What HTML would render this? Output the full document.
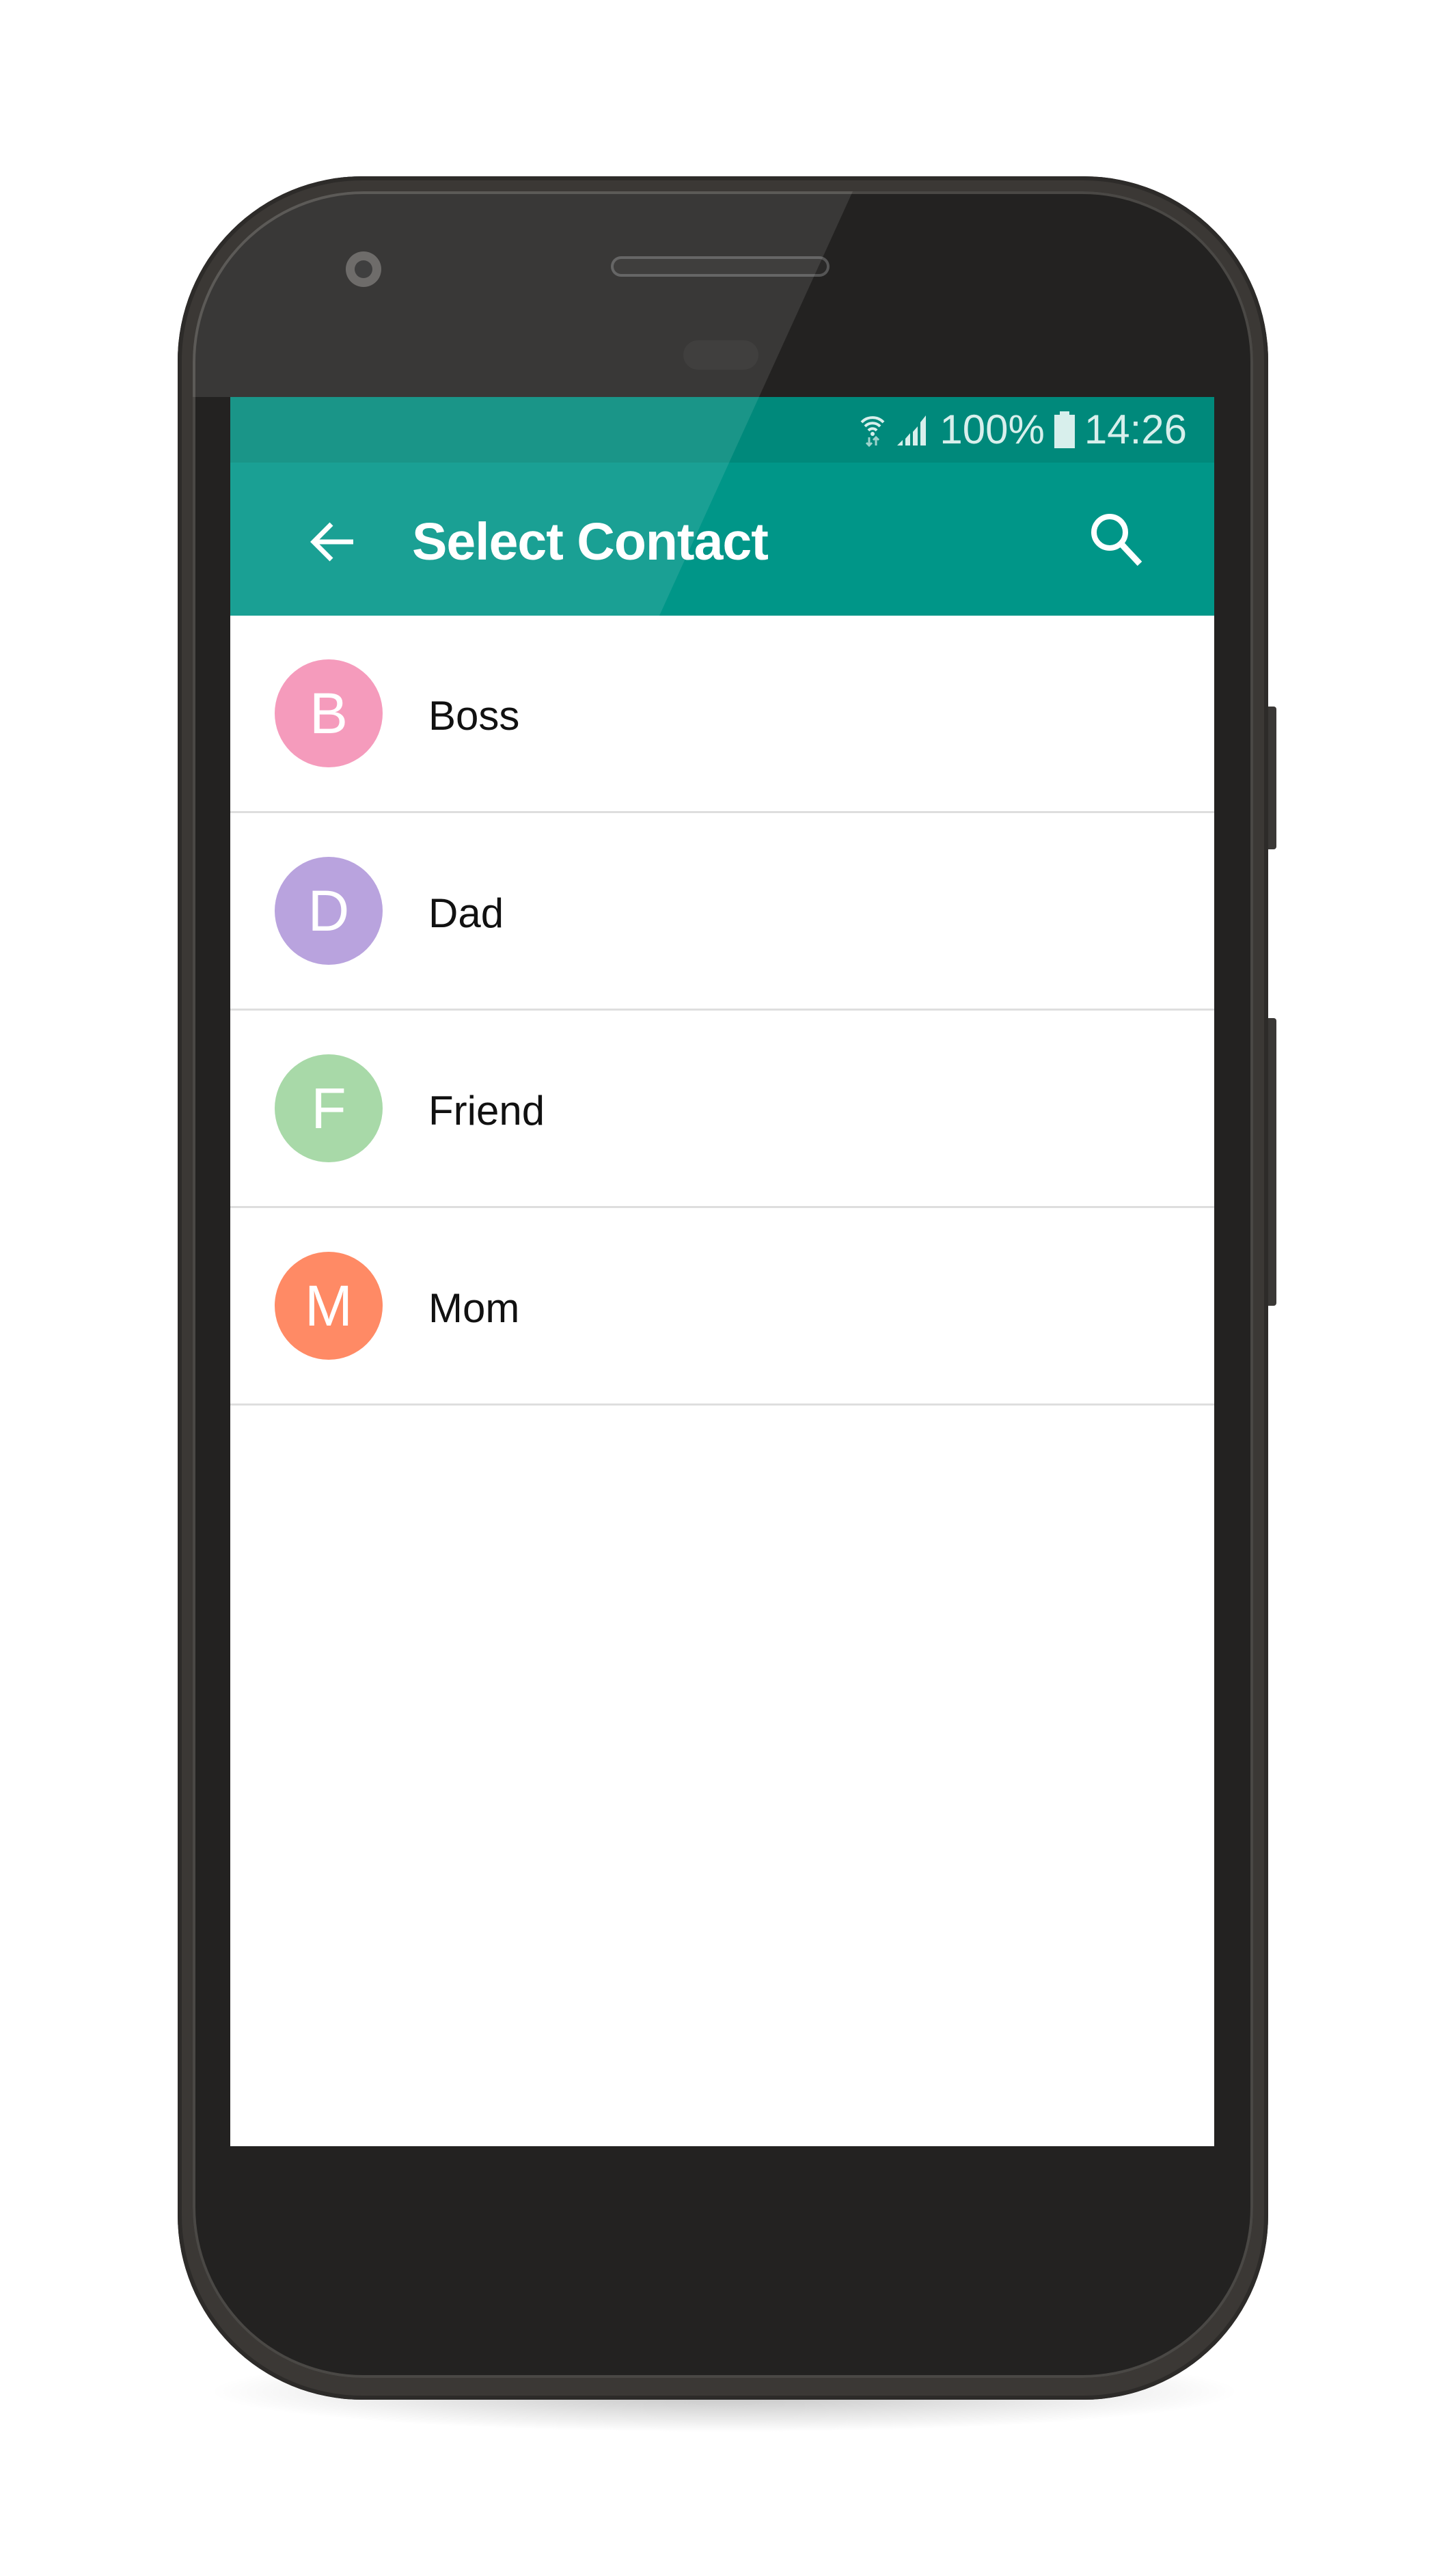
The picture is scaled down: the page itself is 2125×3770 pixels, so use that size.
<!DOCTYPE html>
<html><head><meta charset="utf-8"><style>
*{margin:0;padding:0;box-sizing:border-box}
body{width:2125px;height:3770px;background:#fff;position:relative;overflow:hidden;font-family:"Liberation Sans",Roboto,sans-serif}
.abs{position:absolute}
.shadow{left:300px;top:3440px;width:1520px;height:120px;border-radius:50%;background:radial-gradient(ellipse at center,rgba(0,0,0,.25),rgba(0,0,0,0) 70%)}
.body{left:260px;top:258px;width:1596px;height:3254px;border-radius:270px;background:#3b3835;box-shadow:inset 0 0 0 6px #2d2b29}
.bezel{left:282px;top:280px;width:1552px;height:3200px;border-radius:250px;background:#232221;box-shadow:inset 0 0 0 4px #4a4845}
.screen{left:337px;top:581px;width:1440px;height:2560px;background:#fff;overflow:hidden}
.status{left:0;top:0;width:1440px;height:96px;background:#00897b}
.appbar{left:0;top:96px;width:1440px;height:224px;background:#009688}
.row{left:0;width:1440px;height:289px;border-bottom:3px solid #dedede}
.av{position:absolute;left:65px;top:64px;width:158px;height:158px;border-radius:50%;color:#fff;font-size:84px;text-align:center;line-height:158px}
.nm{position:absolute;left:290px;top:4px;line-height:286px;font-size:60px;color:#111}
</style></head><body>
<div class="abs shadow"></div>
<div class="abs" style="left:1852px;top:1034px;width:16px;height:209px;background:#3a3836;border-radius:4px"></div>
<div class="abs" style="left:1852px;top:1490px;width:16px;height:421px;background:#3a3836;border-radius:4px"></div>
<div class="abs body"></div>
<div class="abs bezel"></div>
<div class="abs" style="left:894px;top:375px;width:320px;height:30px;border-radius:15px;background:#2a2928;box-shadow:inset 0 0 0 4px #555"></div>
<div class="abs" style="left:506px;top:368px;width:52px;height:52px;border-radius:50%;background:#5e5c5a"></div>
<div class="abs" style="left:519px;top:381px;width:26px;height:26px;border-radius:50%;background:#2a2a2a"></div>
<div class="abs" style="left:1000px;top:498px;width:110px;height:43px;border-radius:22px;background:#2b2a29"></div>
<div class="abs screen">
 <div class="abs status"></div>
 <div class="abs" style="right:40px;top:12px;height:72px;line-height:72px;color:#d8efec;font-size:60px;display:flex;align-items:center;gap:14px">
  <svg width="40" height="50" viewBox="0 0 40 50"><path d="M4 14a22 22 0 0 1 32 0M9 20a15 15 0 0 1 22 0M14 26a8 8 0 0 1 12 0" stroke="#d8efec" stroke-width="4" fill="none"/><circle cx="20" cy="31" r="3" fill="#d8efec"/><path d="M15 36v12M11 44l4 4 4-4M25 48V36M21 40l4-4 4 4" stroke="#9fd3cc" stroke-width="3" fill="none"/></svg>
  <svg width="50" height="50" viewBox="0 0 50 50"><path d="M2 48h8v-8zM14 48h7V30l-7 8zM25 48h7V20l-7 8zM36 48h8V4l-8 10z" fill="#d8efec"/></svg>
  <span>100%</span>
  <svg width="30" height="54" viewBox="0 0 30 54"><rect x="8" y="0" width="14" height="6" fill="#d8efec"/><rect x="0" y="5" width="30" height="49" fill="#d8efec"/></svg>
  <span>14:26</span>
 </div>
 <div class="abs appbar"></div>
 <svg class="abs" style="left:110px;top:172px" width="80" height="80" viewBox="0 0 80 80"><path d="M70 40H14M38 14L12 40l26 26" stroke="#fff" stroke-width="7" fill="none"/></svg>
 <div class="abs" style="left:266px;top:164px;font-size:77px;font-weight:bold;color:#fff;line-height:96px;letter-spacing:-1px">Select Contact</div>
 <svg class="abs" style="left:1255px;top:166px" width="84" height="84" viewBox="0 0 84 84"><circle cx="32" cy="32" r="23" stroke="#fff" stroke-width="8" fill="none"/><path d="M48 48l28 30" stroke="#fff" stroke-width="9"/></svg>
 <div class="abs row" style="top:320px"><div class="av" style="background:#f59bbc">B</div><div class="nm">Boss</div></div>
 <div class="abs row" style="top:609px"><div class="av" style="background:#b9a3de">D</div><div class="nm">Dad</div></div>
 <div class="abs row" style="top:898px"><div class="av" style="background:#a8d9a8">F</div><div class="nm">Friend</div></div>
 <div class="abs row" style="top:1187px"><div class="av" style="background:#ff8a65">M</div><div class="nm">Mom</div></div>
</div>
<div class="abs" style="left:282px;top:280px;width:1552px;height:3200px;border-radius:250px;overflow:hidden;pointer-events:none">
 <svg width="1552" height="700" style="display:block"><polygon points="0,0 966,0 683,621 55,621 55,301 0,301" fill="#fff" opacity="0.1"/></svg>
</div>
</body></html>
